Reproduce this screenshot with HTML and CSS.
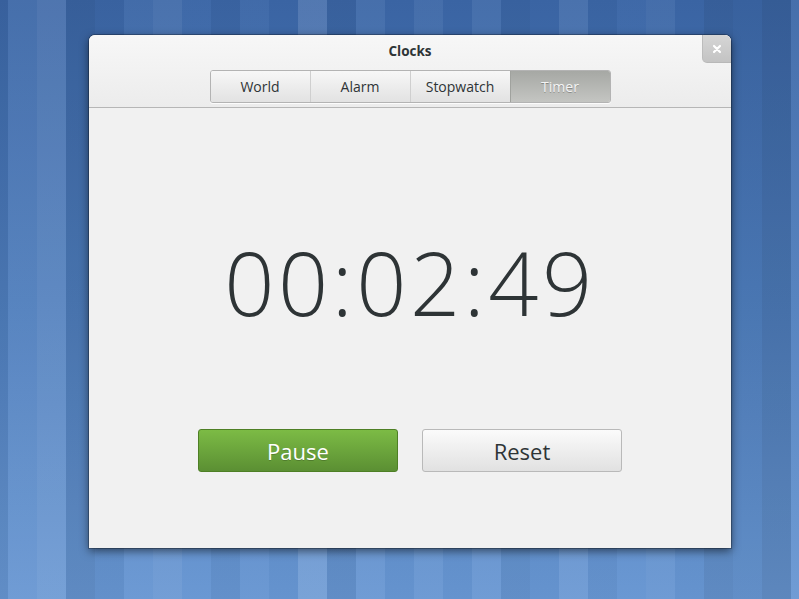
FILE: index.html
```html
<!DOCTYPE html>
<html lang="en">
<head>
    <meta charset="UTF-8">
    <title>Clocks</title>
    <link rel="stylesheet" href="styles.css">
</head>
<body>
    <div class="window">
        <div class="header">
            <div class="title">Clocks</div>
            <div class="tabs">
                <button class="tab">World</button>
                <button class="tab">Alarm</button>
                <button class="tab">Stopwatch</button>
                <button class="tab active">Timer</button>
            </div>
            <button class="close-btn">
                <svg width="10" height="10" viewBox="0 0 10 10">
                    <path d="M2 2 L8 8 M8 2 L2 8" stroke="#fff" stroke-width="2.2" stroke-linecap="round"/>
                </svg>
            </button>
        </div>
        <div class="content">
            <div class="time">00:02:49</div>
            <div class="actions">
                <button class="btn btn-pause">Pause</button>
                <button class="btn btn-reset">Reset</button>
            </div>
        </div>
    </div>
</body>
</html>
```

FILE: styles.css
```css
html, body {
    height: 100%;
}

body {
    margin: 0;
    padding: 35px 0 0 89px;
    box-sizing: border-box;
    font-family: "Open Sans", "DejaVu Sans", sans-serif;
    background-color: #4f7fbd;
    background-image:
        linear-gradient(90deg,
            rgba(0,0,0,0.06) 0 8px,
            rgba(255,255,255,0.06) 8px 37px,
            rgba(255,255,255,0.10) 37px 66px,
            rgba(0,0,0,0.08) 66px 95px,
            rgba(0,0,0,0.04) 95px 124px,
            rgba(255,255,255,0.04) 124px 153px,
            rgba(255,255,255,0.08) 153px 182px,
            rgba(255,255,255,0.02) 182px 211px,
            rgba(0,0,0,0.04) 211px 240px,
            rgba(255,255,255,0.03) 240px 269px,
            rgba(0,0,0,0.02) 269px 298px,
            rgba(255,255,255,0.12) 298px 327px,
            rgba(0,0,0,0.06) 327px 356px,
            rgba(255,255,255,0.06) 356px 385px,
            rgba(0,0,0,0.02) 385px 414px,
            rgba(255,255,255,0.05) 414px 443px,
            rgba(0,0,0,0.02) 443px 472px,
            rgba(255,255,255,0.06) 472px 501px,
            rgba(0,0,0,0.05) 501px 530px,
            rgba(0,0,0,0.02) 530px 559px,
            rgba(255,255,255,0.08) 559px 588px,
            rgba(0,0,0,0.03) 588px 617px,
            rgba(255,255,255,0.02) 617px 646px,
            rgba(255,255,255,0.05) 646px 675px,
            rgba(0,0,0,0.02) 675px 704px,
            rgba(0,0,0,0.08) 704px 733px,
            rgba(0,0,0,0.05) 733px 762px,
            rgba(0,0,0,0.10) 762px 791px,
            rgba(255,255,255,0.06) 791px 799px),
        linear-gradient(180deg, #3b66a6 0%, #4d7cbb 50%, #6796d2 100%);
}

.window {
    width: 642px;
    height: 513px;
    background: #f1f1f1;
    border-radius: 6px 6px 0 0;
    box-shadow: 0 3px 10px rgba(0, 0, 0, 0.55), 0 0 0 1px rgba(0, 0, 0, 0.25);
    display: flex;
    flex-direction: column;
    overflow: hidden;
}

.header {
    position: relative;
    height: 72px;
    background: linear-gradient(#f7f7f7, #ececec);
    border-bottom: 1px solid #b6b6b6;
    display: flex;
    flex-direction: column;
    align-items: center;
}

.title {
    margin-top: 7px;
    font-size: 13.5px;
    font-weight: bold;
    color: #2e3436;
    line-height: 18px;
}

.tabs {
    margin-top: 10px;
    display: flex;
    border: 1px solid #b3b3b3;
    border-radius: 3px;
    overflow: hidden;
    box-shadow: 0 1px 0 rgba(255, 255, 255, 0.8);
}

.tab {
    width: 100px;
    height: 31px;
    border: none;
    border-left: 1px solid #cfcfcf;
    background: linear-gradient(#f7f7f7, #e2e2e2);
    font-family: inherit;
    font-size: 14px;
    color: #2e3436;
    padding: 0;
}

.tab:first-child {
    border-left: none;
    width: 99px;
}

.tab.active {
    background: linear-gradient(#a6a8a4, #c4c5c2);
    border-left: 1px solid #a0a29e;
    color: #f4f4f4;
    text-shadow: 0 1px 0 rgba(0, 0, 0, 0.25);
}

.close-btn {
    position: absolute;
    top: 0;
    right: 0;
    width: 29px;
    height: 28px;
    border: none;
    border-left: 1px solid #bcbcbc;
    border-bottom: 1px solid #b8b8b8;
    border-radius: 0 6px 0 5px;
    background: linear-gradient(#d6d6d6, #c3c3c3);
    display: flex;
    align-items: center;
    justify-content: center;
    padding: 0;
}

.content {
    flex: 1;
    display: flex;
    flex-direction: column;
    align-items: center;
}

.time {
    margin-top: 124px;
    font-size: 88px;
    font-weight: 300;
    line-height: 100px;
    color: #2e3436;
    letter-spacing: 3.5px;
}

.actions {
    margin-top: 97px;
    display: flex;
    gap: 24px;
}

.btn {
    width: 200px;
    height: 43px;
    border-radius: 3px;
    font-family: inherit;
    font-size: 22px;
    padding: 0;
}

.btn-pause {
    border: 1px solid #4e7f25;
    background: linear-gradient(#7cbb45, #5b8f33);
    color: #ffffff;
    text-shadow: 0 1px 0 rgba(0, 0, 0, 0.2);
}

.btn-reset {
    border: 1px solid #b9b9b9;
    background: linear-gradient(#fbfbfb, #e1e1e1);
    color: #2e3436;
}
```
